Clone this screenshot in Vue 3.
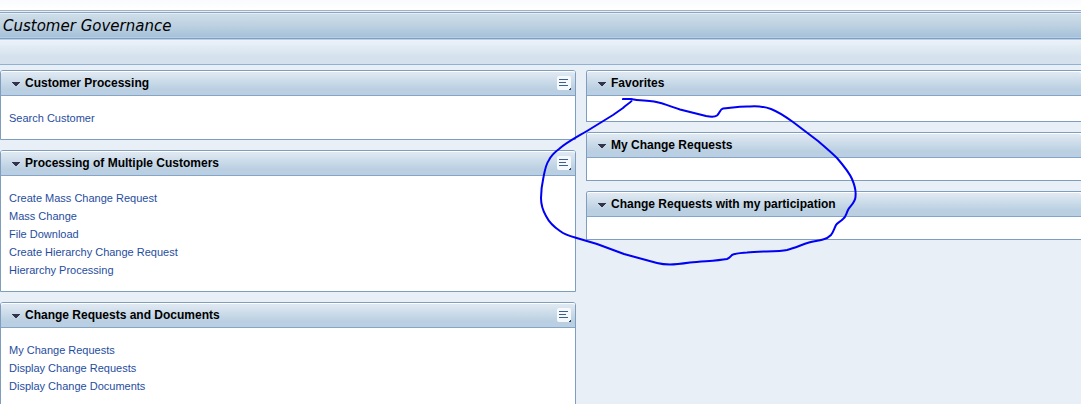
<script setup>
const left = [
  { title: 'Customer Processing', links: ['Search Customer'] },
  {
    title: 'Processing of Multiple Customers',
    links: ['Create Mass Change Request', 'Mass Change', 'File Download', 'Create Hierarchy Change Request', 'Hierarchy Processing'],
  },
  {
    title: 'Change Requests and Documents',
    links: ['My Change Requests', 'Display Change Requests', 'Display Change Documents'],
  },
]
const right = [
  { title: 'Favorites', roomy: true },
  { title: 'My Change Requests' },
  { title: 'Change Requests with my participation' },
]
</script>

<template>
  <div class="page">
    <div class="strip"></div>
    <header class="titlebar"><h1>Customer Governance</h1></header>
    <div class="toolbar"></div>
    <main class="columns">
      <div class="column">
        <section v-for="p in left" :key="p.title" class="panel">
          <div class="head">
            <button class="toggle" type="button" aria-expanded="true">
              <svg class="arrow" width="8" height="6" viewBox="0 0 8 6" shape-rendering="crispEdges" aria-hidden="true"><path d="M0 2H8V3H7V4H6V5H5V6H3V5H2V4H1V3H0Z" fill="#33334d" /></svg>
              <span>{{ p.title }}</span>
            </button>
            <button class="menu" type="button" aria-label="Panel menu">
              <svg width="14" height="14" viewBox="0 0 14 14" shape-rendering="crispEdges" aria-hidden="true">
                <path d="M2 3H11V4H2ZM2 6H9V7H2ZM2 9H11V10H2Z" fill="#3d5f8c" />
                <path d="M14 12V14H12V13H13V12Z" fill="#2e4661" />
              </svg>
            </button>
          </div>
          <ul class="links">
            <li v-for="l in p.links" :key="l"><a href="#">{{ l }}</a></li>
          </ul>
        </section>
      </div>
      <div class="column side">
        <section v-for="p in right" :key="p.title" class="panel">
          <div class="head">
            <button class="toggle" type="button" aria-expanded="true">
              <svg class="arrow" width="8" height="6" viewBox="0 0 8 6" shape-rendering="crispEdges" aria-hidden="true"><path d="M0 2H8V3H7V4H6V5H5V6H3V5H2V4H1V3H0Z" fill="#33334d" /></svg>
              <span>{{ p.title }}</span>
            </button>
          </div>
          <div class="empty" :class="{ roomy: p.roomy }"></div>
        </section>
      </div>
    </main>
    <svg class="ink" width="1081" height="404" viewBox="0 0 1081 404" aria-hidden="true">
      <path d="M623 100V99H631C640 101 646 100 654 101.500C663 103 672 107 680 109.500L706 116C711 117 715 117 717 115.500C720 113 720 109 723 108.500C730 108 740 106 750 106.500C758 106 764 106.500 771 109C779 112 786 117 793 122L818 141C825 147 832 153 837 158C843 165 849 172 852 179C855 186 856 192 855.500 196C856 202 850 206 848 210C846 214 846 217 843 219C840 222 837 223 836 225C834 229 833 233 831 235C828 238 826 239 823 239.500C818 241 814 241 809 242.500C801 245 795 248 787 250C778 252 760 251 747 252.500C741 253 736 253 732 255C730 257 730 258 727 259C716 261 703 261 690 262.500C683 263.500 676 264.500 670 264.500C664 264.500 661 264 657 263L624 254L597 244L575 237.500C569 236 564 234 560 231C554 227 549 222 546 216C542 209 541 204 541 198C541 191 542 184 543.500 177C545 169 546 164 549 160C551 156 555 152 559 149C567 142 577 137 587 131C595 126 605 120 613 115L623 108C626 105 630 103 632 100.500" fill="none" stroke="#0000f5" stroke-width="2" stroke-linejoin="round" />
    </svg>
  </div>
</template>

<style>
html, body { background: #e8eff6; overflow: hidden; }
</style>

<style scoped>
.page { position: relative; height: 100vh; overflow: hidden; font-family: "Liberation Sans", Arial, sans-serif; font-size: 11px; color: #000; }
.strip { height: 10px; margin-bottom: 1px; border-bottom: 1px solid #9eb0c6; background: linear-gradient(#f9fbfd, #fff); }
.titlebar { height: 23px; padding: 2px 3px 0; border-top: 1px solid #8ba4c1; border-bottom: 1px solid #7d9fc4; background: linear-gradient(#d0dee9, #bdd1e1 50%, #a4c0da); box-shadow: inset 0 1px #e5eef5, inset 0 -1px #b4cfe5; }
h1 { margin: 0; font: italic 15px/23px "DejaVu Sans", Verdana, sans-serif; }
.toolbar { height: 25px; border-bottom: 1px solid #8fb2d4; background: linear-gradient(#edf3fa, #d5e2ed 70%, #d5e2ed); box-shadow: inset 0 1px #b9d0e5; }
.columns { display: grid; grid-template-columns: 576fr 495fr; gap: 10px; padding-top: 5px; }
.column { display: flex; flex-direction: column; gap: 10px; }
.panel { border: 1px solid #7f9dbd; border-radius: 3px 3px 0 0; background: #fff; }
.side .panel { border-right: 0; border-top-right-radius: 0; }
.head { display: flex; align-items: center; justify-content: space-between; height: 24px; padding: 0 4px 0 11px; border-bottom: 1px solid #85a5c8; border-radius: 2px 2px 0 0; background: linear-gradient(#e3ebf3, #bad0e2 75%, #bad0e2); box-shadow: inset 0 1px #fff; }
button { border: 0; padding: 0; background: none; font: inherit; color: inherit; }
.toggle { display: flex; align-items: center; gap: 5px; font-size: 12px; font-weight: bold; line-height: 24px; }
.menu { display: flex; border-radius: 2px; background: #f5f9fc; }
.links { list-style: none; margin: 0; padding: 13px 8px 12px; line-height: 18px; }
.links a { color: #1f4da0; text-decoration: none; }
.empty { height: 22px; }
.roomy { height: 25px; }
.ink { position: absolute; top: 0; left: 0; pointer-events: none; }
</style>
